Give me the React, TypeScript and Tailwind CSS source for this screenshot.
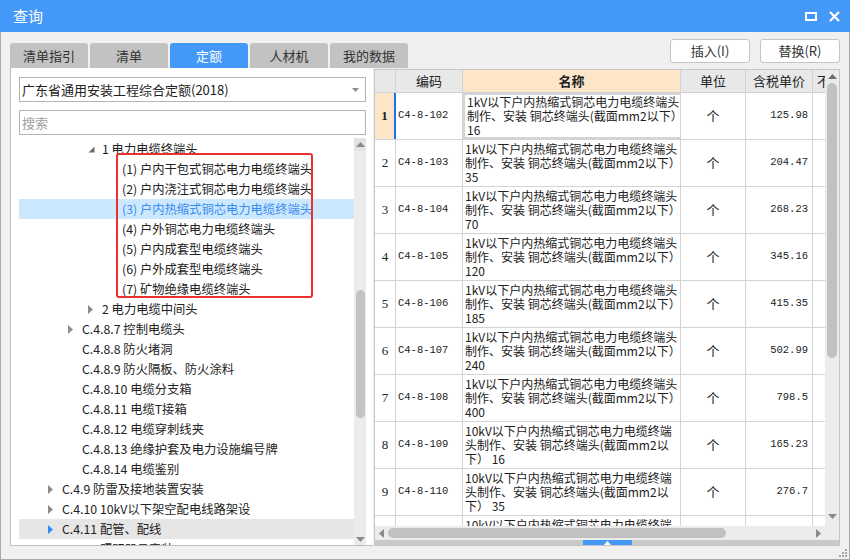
import type { ReactNode } from 'react';

type TreeRow = {
  level: number;
  arrow?: 'open' | 'closed' | 'active';
  label: string;
  state?: 'selected' | 'current';
};

const treeRows: TreeRow[] = [
  { level: 2, arrow: 'open', label: '1 电力电缆终端头' },
  { level: 3, label: '(1) 户内干包式铜芯电力电缆终端头' },
  { level: 3, label: '(2) 户内浇注式铜芯电力电缆终端头' },
  { level: 3, label: '(3) 户内热缩式铜芯电力电缆终端头', state: 'selected' },
  { level: 3, label: '(4) 户外铜芯电力电缆终端头' },
  { level: 3, label: '(5) 户内成套型电缆终端头' },
  { level: 3, label: '(6) 户外成套型电缆终端头' },
  { level: 3, label: '(7) 矿物绝缘电缆终端头' },
  { level: 2, arrow: 'closed', label: '2 电力电缆中间头' },
  { level: 1, arrow: 'closed', label: 'C.4.8.7 控制电缆头' },
  { level: 1, label: 'C.4.8.8 防火堵洞' },
  { level: 1, label: 'C.4.8.9 防火隔板、防火涂料' },
  { level: 1, label: 'C.4.8.10 电缆分支箱' },
  { level: 1, label: 'C.4.8.11 电缆T接箱' },
  { level: 1, label: 'C.4.8.12 电缆穿刺线夹' },
  { level: 1, label: 'C.4.8.13 绝缘护套及电力设施编号牌' },
  { level: 1, label: 'C.4.8.14 电缆鉴别' },
  { level: 0, arrow: 'closed', label: 'C.4.9 防雷及接地装置安装' },
  { level: 0, arrow: 'closed', label: 'C.4.10 10kV以下架空配电线路架设' },
  { level: 0, arrow: 'active', label: 'C.4.11 配管、配线', state: 'current' },
  { level: 0, arrow: 'closed', label: 'C.4.12 照明器具安装' },
];

const low = ['制作、安装 铜芯终端头(截面mm2以下）'];
const high = ['10kV以下户内热缩式铜芯电力电缆终端', '头制作、安装 铜芯终端头(截面mm2以'];

const quotaRows = [
  { code: 'C4-8-102', lines: ['1kV以下户内热缩式铜芯电力电缆终端头', ...low, '16'], price: '125.98' },
  { code: 'C4-8-103', lines: ['1kV以下户内热缩式铜芯电力电缆终端头', ...low, '35'], price: '204.47' },
  { code: 'C4-8-104', lines: ['1kV以下户内热缩式铜芯电力电缆终端头', ...low, '70'], price: '268.23' },
  { code: 'C4-8-105', lines: ['1kV以下户内热缩式铜芯电力电缆终端头', ...low, '120'], price: '345.16' },
  { code: 'C4-8-106', lines: ['1kV以下户内热缩式铜芯电力电缆终端头', ...low, '185'], price: '415.35' },
  { code: 'C4-8-107', lines: ['1kV以下户内热缩式铜芯电力电缆终端头', ...low, '240'], price: '502.99' },
  { code: 'C4-8-108', lines: ['1kV以下户内热缩式铜芯电力电缆终端头', ...low, '400'], price: '798.5' },
  { code: 'C4-8-109', lines: [...high, '下） 16'], price: '165.23' },
  { code: 'C4-8-110', lines: [...high, '下） 35'], price: '276.7' },
  { code: 'C4-8-111', lines: [...high, '下） 70'], price: '345.6' },
];

const tabs = ['清单指引', '清单', '定额', '人材机', '我的数据'];

function Tri({ dir, color = '#8a8a8a' }: { dir: 'up' | 'down' | 'left' | 'right'; color?: string }) {
  const pts = {
    up: '0,5 4.5,0 9,5',
    down: '0,0 9,0 4.5,5',
    left: '5,0 5,9 0,4.5',
    right: '0,0 5,4.5 0,9',
  }[dir];
  const vertical = dir === 'up' || dir === 'down';
  return (
    <svg width={vertical ? 9 : 5} height={vertical ? 5 : 9} viewBox={vertical ? '0 0 9 5' : '0 0 5 9'}>
      <polygon points={pts} fill={color} />
    </svg>
  );
}

function TreeArrow({ kind }: { kind: TreeRow['arrow'] }) {
  if (kind === 'open') {
    return (
      <svg width="7" height="7" viewBox="0 0 7 7">
        <polygon points="6.5,0.5 6.5,6.5 0.5,6.5" fill="#6b6b6b" />
      </svg>
    );
  }
  return (
    <svg width="5" height="9" viewBox="0 0 5 9">
      <polygon points="0,0 5,4.5 0,9" fill={kind === 'active' ? '#2f8cf5' : '#8c8c8c'} />
    </svg>
  );
}

function Cell({ w, className = '', children }: { w: string; className?: string; children?: ReactNode }) {
  return (
    <div className={`${w} shrink-0 h-full border-r border-[#d4d4d4] flex items-center overflow-hidden whitespace-nowrap ${className}`}>
      {children}
    </div>
  );
}

export default function App() {
  return (
    <div className="w-[850px] h-[560px] flex flex-col bg-[#f0f0f0] font-['Noto_Sans_CJK_SC',sans-serif] text-[#222] overflow-hidden">
      {/* title bar */}
      <div className="h-[32px] shrink-0 bg-[#4499f8] flex items-center justify-between pl-[13px] pr-[10px]">
        <span className="text-white text-[15px]">查询</span>
        <div className="flex items-center gap-[12px]">
          <svg width="12" height="9" viewBox="0 0 12 9">
            <rect x="1" y="1" width="10" height="7" fill="none" stroke="white" strokeWidth="2" />
          </svg>
          <svg width="11" height="11" viewBox="0 0 11 11">
            <path d="M1 1 L10 10 M10 1 L1 10" stroke="white" strokeWidth="2.2" />
          </svg>
        </div>
      </div>

      <div className="flex-1 flex flex-col border-x border-b border-[#a9a9a9] pl-[9px] pr-[9px]">
        {/* tabs + buttons */}
        <div className="h-[36px] shrink-0 flex justify-between">
          <div className="flex gap-[2px] mt-[11px]">
            {tabs.map((t) => (
              <div
                key={t}
                className={`w-[78px] h-[25px] rounded-t-[3px] flex items-center justify-center text-[13px] ${
                  t === '定额' ? 'bg-[#4499f8] text-white' : 'bg-[#c2c2c2] text-[#333]'
                }`}
              >
                {t}
              </div>
            ))}
          </div>
          <div className="flex gap-[10px] mt-[7px]">
            <button className="w-[80px] h-[24px] bg-white border border-[#c4c4c4] rounded-[3px] text-[13px] text-[#333]">插入(I)</button>
            <button className="w-[80px] h-[24px] bg-white border border-[#c4c4c4] rounded-[3px] text-[13px] text-[#333]">替换(R)</button>
          </div>
        </div>

        {/* main */}
        <div className="h-[478px] shrink-0 flex">
          {/* left panel */}
          <div className="w-[363px] shrink-0 bg-white border-l border-b border-[#bdbdbd] pl-[8px] pr-[7px] pt-[9px] flex flex-col">
            <div className="h-[25px] shrink-0 border border-[#b4b4b4] flex items-center justify-between pl-[2px] pr-[6px] text-[13px] text-[#222]">
              <span>广东省通用安装工程综合定额(2018)</span>
              <svg width="7" height="4" viewBox="0 0 7 4">
                <polygon points="0,0 7,0 3.5,4" fill="#8c8c8c" />
              </svg>
            </div>
            <div className="h-[25px] shrink-0 mt-[8px] border border-[#b4b4b4] flex items-center pl-[2px] text-[13px] text-[#a0a0a0]">搜索</div>
            <div className="mt-[3px] flex-1 min-h-0 flex">
              <div className="relative flex-1 overflow-hidden pt-[1px]">
                {treeRows.map((r) => (
                  <div
                    key={r.label}
                    className={`h-[20px] flex items-center text-[12.3px] whitespace-nowrap ${
                      r.state === 'selected' ? 'bg-[#cce8ff] text-[#3b8cf0]' : r.state === 'current' ? 'bg-[#e6e6e6]' : ''
                    }`}
                    style={{ paddingLeft: 29 + r.level * 20 }}
                  >
                    <span className="w-[14px] shrink-0 flex items-center">{r.arrow && <TreeArrow kind={r.arrow} />}</span>
                    <span>{r.label}</span>
                  </div>
                ))}
                <div className="absolute left-[97px] top-[15px] w-[197px] h-[145px] border-2 border-[#ec2f2f] rounded-[3px]" />
              </div>
              <div className="w-[12px] shrink-0 bg-[#ececec] flex flex-col items-center">
                <div className="h-[13px] w-full bg-[#e2e2e2] flex items-center justify-center">
                  <Tri dir="up" />
                </div>
                <div className="mt-[139px] h-[128px] w-[9px] rounded-full bg-[#c3c3c3]" />
                <div className="flex-1" />
                <div className="h-[12px] flex items-center justify-center">
                  <Tri dir="down" />
                </div>
              </div>
            </div>
          </div>

          {/* table */}
          <div className="ml-[1px] mt-[1px] flex-1 border border-[#c6c6c6] bg-white flex flex-col">
            <div className="h-[456px] flex">
              <div className="w-[450px] shrink-0 overflow-hidden flex flex-col">
                <div className="h-[23px] shrink-0 flex border-b border-[#d0d0d0] bg-[#e8e8e8] text-[13px]">
                  <Cell w="w-[21px]" />
                  <Cell w="w-[67px]" className="justify-center">编码</Cell>
                  <Cell w="w-[218px]" className="justify-center bg-[#fde5c8] font-bold">名称</Cell>
                  <Cell w="w-[65px]" className="justify-center">单位</Cell>
                  <Cell w="w-[67px]" className="justify-center">含税单价</Cell>
                  <Cell w="w-[40px]" className="pl-[4px]">不含税单价</Cell>
                </div>
                {quotaRows.map((r, i) => {
                  const first = i === 0;
                  return (
                    <div key={r.code} className="h-[47px] shrink-0 flex border-b border-[#d4d4d4]">
                      <Cell
                        w="w-[21px]"
                        className={`justify-center font-['Liberation_Serif',serif] text-[13px] ${first ? 'bg-[#fde5c8] font-bold border-r-2 border-r-[#1f6ff0]' : ''}`}
                      >
                        {i + 1}
                      </Cell>
                      <Cell w="w-[67px]" className="pl-[2px] font-['Liberation_Mono',monospace] text-[10.5px]">
                        {r.code}
                      </Cell>
                      <Cell w="w-[218px]" className={`pl-[2px] ${first ? 'border-2 border-[#727272]' : ''}`}>
                        <div className="text-[12px] leading-[14px]">
                          {r.lines.map((l) => (
                            <div key={l}>{l}</div>
                          ))}
                        </div>
                      </Cell>
                      <Cell w="w-[65px]" className="justify-center text-[13px]">个</Cell>
                      <Cell w="w-[67px]" className="justify-end pr-[4px] font-['Liberation_Mono',monospace] text-[10.5px]">
                        {r.price}
                      </Cell>
                      <Cell w="w-[40px]" />
                    </div>
                  );
                })}
              </div>
              <div className="flex-1 bg-[#ececec] flex flex-col items-center">
                <div className="h-[13px] flex items-center justify-center">
                  <Tri dir="up" color="#6e6e6e" />
                </div>
                <div className="h-[275px] w-[10px] rounded-full bg-[#c1c1c1]" />
                <div className="flex-1" />
                <div className="h-[13px] flex items-center justify-center mb-[3px]">
                  <Tri dir="down" color="#8a8a8a" />
                </div>
              </div>
            </div>
            <div className="h-[14px] shrink-0 bg-[#ececec] flex items-center">
              <div className="w-[13px] flex justify-center">
                <Tri dir="left" color="#8a8a8a" />
              </div>
              <div className="w-[338px] h-[10px] rounded-full bg-[#c1c1c1]" />
              <div className="flex-1" />
              <div className="w-[13px] flex justify-center">
                <Tri dir="right" color="#8a8a8a" />
              </div>
              <div className="w-[14px]" />
            </div>
            <div className="h-[5px] shrink-0 bg-[#c9c9c9] flex justify-center">
              <div className="w-[49px] h-full bg-[#4499f8] flex items-center justify-center">
                <svg width="7" height="4" viewBox="0 0 7 4">
                  <polygon points="0,4 3.5,0 7,4" fill="white" />
                </svg>
              </div>
            </div>
          </div>
        </div>

        {/* bottom with resize grip */}
        <div className="flex-1 flex justify-end items-end pb-[1px]">
          <svg width="10" height="10" viewBox="0 0 10 10" className="-mr-[8px]">
            {[
              [8, 2],
              [5, 5],
              [8, 5],
              [2, 8],
              [5, 8],
              [8, 8],
            ].map(([x, y]) => (
              <rect key={`${x}-${y}`} x={x - 1} y={y - 1} width="2" height="2" fill="#a8a8a8" />
            ))}
          </svg>
        </div>
      </div>
    </div>
  );
}
